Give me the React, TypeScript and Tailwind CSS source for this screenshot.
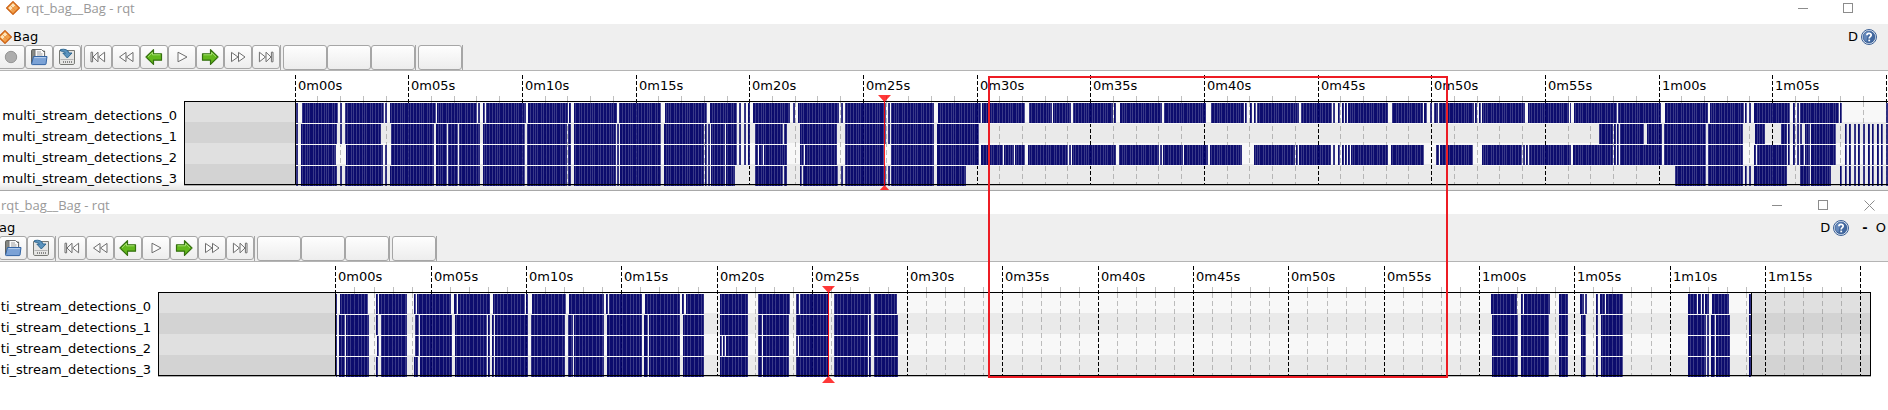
import React from "react";

type Span = [number, number];

interface TimelineData {
  id: string;
  left: number;
  dataStart: number;
  dataEnd: number;
  boxEnd: number;
  secondWidth: number;
  origin: number;
  labels: string[];
  rows: Span[][];
  cursor: number;
  lightStripes: number[];
  stripePeriod: number;
}

/** Turns a compact "a-b a-b" list of empty spans into the filled spans between them. */
function filled(start: number, end: number, gaps: string): Span[] {
  const result: Span[] = [];
  let at = start;
  for (const gap of gaps.trim().split(/\s+/)) {
    const [from, to] = gap.split("-").map(Number);
    if (from > at) result.push([at, from]);
    at = to;
  }
  if (at < end) result.push([at, end]);
  return result;
}

const ticks = "1847-1849 1851-1854 1856-1858 1860-1863 1865-1868 1870-1872 1874-1877 1879-1881 1883-1886";
const tail = `1836-1845 ${ticks}`;
const early = "434-436 447-448 458-459 480-483 525-527 567-568 571-574 616-617 619-620 661-664 704-705 707-708 710-711 725-726";

const topRows: Span[][] = [
  filled(
    296,
    1888,
    "298-302 338-340 342-345 384-385 387-390 436-437 477-478 480-483 485-486 526-528 568-569 571-574 617-619 661-665 707-710 737-739 741-744 746-748 750-753 790-793 795-798 839-841 843-845 886-888 890-891 934-938 981-982 1025-1029 1052-1053 1071-1073 1113-1114 1116-1120 1162-1164 1206-1211 1244-1245 1247-1250 1252-1254 1256-1257 1299-1301 1332-1333 1335-1338 1340-1342 1344-1345 1347-1348 1388-1392 1423-1424 1427-1430 1432-1434 1438-1439 1474-1475 1477-1479 1481-1482 1525-1528 1569-1570 1571-1574 1617-1618 1661-1665 1708-1710 1744-1745 1747-1749 1751-1754 1790-1793 1795-1797 1799-1800 1839-1840 1842-1886",
  ),
  filled(
    296,
    1888,
    `298-301 337-340 342-345 381-391 ${early} 737-739 741-744 746-748 750-755 783-784 787-800 837-845 886-888 890-891 934-937 979-1599 1613-1614 1616-1617 1619-1620 1644-1647 1662-1664 1706-1708 1743-1755 1765-1781 1787-1788 1790-1793 1795-1797 1799-1800 1802-1805 1810-1811 ${tail}`,
  ),
  filled(
    296,
    1888,
    `298-301 336-346 383-385 387-391 ${early} 737-739 741-744 746-748 750-755 758-759 763-764 787-800 804-805 837-845 884-891 934-937 979-981 1003-1004 1014-1015 1025-1028 1068-1069 1071-1072 1116-1119 1159-1160 1162-1163 1183-1184 1208-1210 1242-1254 1295-1296 1298-1299 1331-1333 1335-1338 1340-1342 1344-1345 1347-1348 1350-1351 1388-1391 1424-1436 1439-1440 1473-1482 1522-1523 1525-1526 1528-1529 1571-1573 1613-1614 1616-1617 1619-1620 1662-1664 1706-1708 1743-1754 1756-1757 1787-1788 1790-1793 1795-1797 1799-1800 1804-1805 1810-1811 ${tail}`,
  ),
  filled(
    296,
    1888,
    `298-301 337-340 342-345 383-385 387-390 ${early} 735-755 783-784 787-800 802-803 838-841 843-845 886-888 890-891 934-937 966-1675 1706-1708 1743-1745 1747-1749 1751-1754 1787-1800 1810-1811 1831-1840 1842-1845 ${ticks}`,
  ),
];

const mid = "487-488 490-492 494-495 528-531 565-568 573-574 604-607 642-644 648-649 680-683 704-720";
const late = "898-1492 1518-1521 1549-1559 1568-1581 1586-1596 1598-1601 1623-1688 1706-1707 1709-1711 1715-1716 1730-1749";

const bottomRows: Span[][] = [
  filled(
    336,
    1751,
    "337-340 368-376 378-379 407-414 416-417 451-454 457-458 490-493 525-526 528-532 566-569 604-606 608-609 642-645 680-682 684-686 704-720 748-758 790-796 799-800 829-834 871-874 897-1491 1517-1521 1523-1524 1550-1559 1568-1580 1584-1585 1587-1596 1598-1600 1605-1606 1623-1688 1697-1698 1701-1702 1704-1705 1709-1712 1729-1749",
  ),
  filled(336, 1751, `337-339 345-346 369-376 378-381 407-415 419-420 452-455 ${mid} 748-758 762-763 789-796 829-834 868-869 871-874 ${late}`),
  filled(
    336,
    1751,
    `337-339 345-346 369-377 379-381 407-415 419-420 452-455 ${mid} 722-723 725-726 748-758 762-763 789-796 798-799 829-834 868-869 871-874 ${late}`,
  ),
  filled(336, 1751, `337-339 345-346 369-376 378-381 407-414 418-420 452-455 ${mid} 748-758 762-763 789-796 829-834 868-869 871-874 ${late}`),
];

const timeLabels = (count: number) =>
  Array.from({ length: count }, (_, i) => {
    const s = i * 5;
    return `${Math.floor(s / 60)}m${String(s % 60).padStart(2, "0")}s`;
  });

const topTimeline: TimelineData = {
  id: "top",
  left: 184,
  dataStart: 295,
  dataEnd: 4000,
  boxEnd: 4000,
  origin: 295.1,
  secondWidth: 113.66 / 5,
  labels: [...timeLabels(14), ""],
  rows: topRows,
  cursor: 884,
  lightStripes: [1, 3, 5, 9, 11, 14, 17],
  stripePeriod: 19,
};

const bottomTimeline: TimelineData = {
  id: "bottom",
  left: 158,
  dataStart: 335,
  dataEnd: 1751,
  boxEnd: 1871,
  origin: 335.9,
  secondWidth: 95.3 / 5,
  labels: [...timeLabels(16), ""],
  rows: bottomRows,
  cursor: 828,
  lightStripes: [1, 4, 7, 10, 14],
  stripePeriod: 17,
};

const TOP = 30;
const ROW = 21;
const BOTTOM = 113;

function Timeline({ data, className = "" }: { data: TimelineData; className?: string }) {
  const { left, dataStart, dataEnd, boxEnd, cursor } = data;
  const seconds = (data.labels.length - 1) * 5;
  return (
    <svg className={`h-[119px] min-w-0 flex-1 ${className}`} role="img" aria-label="Message timeline" shapeRendering="crispEdges">
      <defs>
        <pattern id={`light-${data.id}`} width={data.stripePeriod} height="20" patternUnits="userSpaceOnUse">
          {data.lightStripes.map((x) => (
            <rect key={x} x={x} width="1" height="20" fill="#ffffff" fillOpacity="0.18" />
          ))}
        </pattern>
      </defs>
      <g transform={`translate(${-left} 0)`}>
        {[0, 1, 2, 3].map((r) => {
          const odd = r % 2 === 1;
          const y = TOP + r * ROW;
          return (
            <g key={r}>
              <rect x={left} y={y} width={boxEnd - left} height={ROW} fill={odd ? "#d3d3d3" : "#e0e0e0"} />
              <rect x={dataStart} y={y} width={dataEnd - dataStart} height={ROW} fill={odd ? "#eaeaea" : "#f8f8f8"} />
              <rect x={left} y={y + ROW} width={boxEnd - left} height="1" fill="#acacac" />
              <rect x={dataStart} y={y + ROW} width={dataEnd - dataStart} height="1" fill="#bebebe" />
            </g>
          );
        })}
        {Array.from({ length: seconds + 1 }, (_, s) => {
          const x = Math.floor(data.origin + s * data.secondWidth) + 0.5;
          return s % 5 === 0 ? (
            <line key={s} x1={x} x2={x} y1="4" y2={BOTTOM} stroke="#000" strokeDasharray="4 2" />
          ) : (
            <g key={s} stroke="#808080" strokeOpacity="0.5">
              <line x1={x} x2={x} y1="25" y2={TOP} />
              <line x1={x} x2={x} y1={TOP + 1} y2={BOTTOM} strokeDasharray="5 3" />
            </g>
          );
        })}
        {data.rows.map((spans, r) => (
          <g key={r}>
            {spans.map(([from, to]) => {
              const y = TOP + 2 + r * ROW;
              return (
                <g key={from}>
                  <rect x={from} y={y} width={to - from} height="20" fill="#000066" fillOpacity="0.95" />
                  <rect x={from} y={y} width={to - from} height="20" fill={`url(#light-${data.id})`} />
                  <rect x={to - 1} y={y} width="1" height="20" fill="#ffffff" fillOpacity="0.14" />
                  {r < 3 && <rect x={from} y={y + 20} width={to - from} height="1" fill="#f8f8f8" />}
                </g>
              );
            })}
          </g>
        ))}
        <rect x={left + 0.5} y={TOP + 0.5} width={boxEnd - left - 1} height={BOTTOM - TOP} fill="none" stroke="#000" />
        <rect x={dataStart} y={TOP} width="1" height={BOTTOM - TOP} fill="#000" />
        <rect x={dataEnd} y={TOP} width="1" height={BOTTOM - TOP} fill="#000" />
        {data.labels.map((label, i) =>
          label ? (
            <text
              key={label}
              x={Math.floor(data.origin + i * 5 * data.secondWidth) + 3}
              y="19"
              className="fill-black font-['DejaVu_Sans',sans-serif] text-[13px]"
            >
              {label}
            </text>
          ) : null,
        )}
        <rect x={cursor} y={TOP} width="1" height={BOTTOM - TOP + 1} fill="#ff0000" fillOpacity="0.9" />
        <path
          d={`M${cursor - 6} 24h13l-6.500 7z M${cursor + 0.5} 114l6.500 7h-13z`}
          fill="#ff0000"
          fillOpacity="0.78"
          className="[shape-rendering:geometricPrecision]"
        />
      </g>
    </svg>
  );
}

function Logo() {
  return (
    <svg viewBox="0 0 14 14" className="size-3.5 shrink-0" aria-hidden="true">
      <path d="M7 .6 13.400 7 7 13.400.6 7z" fill="#f3a343" stroke="#c8590f" strokeWidth="1.100" />
      <path d="M7 1.800 9.800 4.600 6.500 8 5.200 10 1.800 7z" fill="#fde3bb" />
      <path d="M9.800 4.600 12.200 7 7 12.200 5.200 10 6.500 8z" fill="#f0a050" />
      <path d="M7 1.800 12.200 7 7 12.200 1.800 7z M4.400 4.400l5.200 5.200M9.600 4.400 4.400 9.600" fill="none" stroke="#e98a2c" strokeWidth=".7" />
    </svg>
  );
}

function Help() {
  return (
    <svg viewBox="0 0 16 16" className="block size-4" aria-hidden="true">
      <circle cx="8" cy="8" r="7.500" fill="#eef3fa" stroke="#3a5f95" />
      <circle cx="8" cy="8" r="6" fill="#42689f" stroke="#204a87" strokeWidth=".6" />
      <path d="M2.500 9a5.500 5.500 0 0 1 7-6.300Q6 5 5.500 12.800A5.500 5.500 0 0 1 2.500 9z" fill="#7d9fce" opacity=".6" />
      <path d="M5.900 6.300C5.900 3.600 10.200 3.700 10.200 6.100 10.200 7.700 8.200 7.600 8.200 9.400" fill="none" stroke="#fff" strokeWidth="1.700" />
      <rect x="7.300" y="10.600" width="1.800" height="1.700" fill="#fff" />
    </svg>
  );
}

type IconName = "record" | "open" | "save" | "start" | "rewind" | "slower" | "play" | "faster" | "forward" | "end";

const outline = { fill: "#fcfcfc", stroke: "#6e6e6e", strokeWidth: 1 } as const;
const green = { fill: "#62b81c", stroke: "#357010", strokeWidth: 1.2, strokeLinejoin: "round" } as const;

const icons: Record<IconName, React.ReactNode> = {
  record: <circle cx="9" cy="9" r="5.700" fill="#adadad" stroke="#959595" />,
  open: (
    <>
      <path d="M1.600 15.500V2.600q0-1 1-1h3l1 1.500h8V14" fill="#888a85" stroke="#555753" />
      <path d="M5 9.500V1.500h6.500L14.500 4.500v5z" fill="#fafafa" stroke="#707070" />
      <path d="M7 4h4M7 6h5.500M7 8h5.500" stroke="#a0a0a0" />
      <path d="M3.500 8.500h13.500l-1 7.500q-.1.600-.8.600H2.300q-.8 0-.7-.8z" fill="#7ba2d6" stroke="#3465a4" />
      <path d="M4.400 9.600h11.400" stroke="#b9d1ee" />
    </>
  ),
  save: (
    <>
      <path d="M1.500 2.500h15v11.500q0 2.500-1 2.500H2.500q-1 0-1-2.500z" fill="#e6e6e4" stroke="#777974" />
      <path d="M2.500 11.500h13" stroke="#b5b5b5" />
      <path d="M5 14h1M7 14h1M9 14h1M11 14h1M13 14h1" stroke="#888" strokeWidth="2" />
      <path d="M2.500 1.500q7-1.300 8.500 3.500h3L9.300 10 4.800 5h2.700Q6.500 3 2.500 3z" fill="#5b93bd" stroke="#26618c" strokeWidth=".9" />
    </>
  ),
  start: (
    <g {...outline}>
      <path d="M2 4.200h1.600v9.600H2zM9 4.200v9.600L4 9zM15.600 4.200v9.600L9.600 9z" />
    </g>
  ),
  rewind: (
    <g {...outline}>
      <path d="M9 4.400v9.200L2.500 9zM16 4.400v9.200L9.500 9z" />
    </g>
  ),
  slower: (
    <>
      <path d="M1 9 8.500 1.600v4.200h8v6.400h-8v4.200z" {...green} />
      <path d="M3 8.800 7.500 4.400v2.400h8" fill="none" stroke="#a5df70" />
    </>
  ),
  play: <path d="M5 4.200v9.600L14 9z" {...outline} />,
  faster: (
    <>
      <path d="M17 9 9.500 1.600v4.200h-8v6.400h8v4.200z" {...green} />
      <path d="M2.500 6.800h8V4.400L15 8.800" fill="none" stroke="#a5df70" />
    </>
  ),
  forward: (
    <g {...outline}>
      <path d="M2.500 4.400v9.200L9 9zM9.500 4.400v9.200L16 9z" />
    </g>
  ),
  end: (
    <g {...outline}>
      <path d="M14.400 4.200H16v9.600h-1.600zM9 4.200v9.600L14 9zM2.400 4.200v9.600L8.400 9z" />
    </g>
  ),
};

const face = "shrink-0 rounded-[3px] border border-[#a6a6a6] bg-linear-to-b from-[#fefefe] to-[#ededed]";

function ToolButton({ name }: { name: IconName }) {
  return (
    <button type="button" aria-label={name} className={`flex h-6 w-7 items-center justify-center ${face}`}>
      <svg viewBox="0 0 18 18" className="size-[18px]" aria-hidden="true">
        {icons[name]}
      </svg>
    </button>
  );
}

function BlankButton({ label }: { label: string }) {
  return <button type="button" aria-label={label} className={`h-[25px] w-11 ${face}`} />;
}

function Separator() {
  return <div className="h-[25px] w-[3px] shrink-0 border-l border-[#a6a6a6]" />;
}

function Toolbar({ first, className }: { first: IconName[]; className: string }) {
  const playback: IconName[] = ["start", "rewind", "slower", "play", "faster", "forward", "end"];
  return (
    <div className={`flex h-[25px] items-start ${className}`}>
      {first.map((n) => (
        <ToolButton key={n} name={n} />
      ))}
      <Separator />
      {playback.map((n) => (
        <ToolButton key={n} name={n} />
      ))}
      <Separator />
      <BlankButton label="Zoom in" />
      <BlankButton label="Zoom out" />
      <BlankButton label="Zoom reset" />
      <Separator />
      <BlankButton label="Thumbnails" />
      <Separator />
    </div>
  );
}

function WindowControls({ close, className }: { close?: boolean; className: string }) {
  return (
    <div className={`ml-auto flex items-center text-[#8c8c8c] ${className}`}>
      <button type="button" aria-label="Minimize" className="flex size-[11px] items-center">
        <span className="h-px w-[10px] bg-current" />
      </button>
      <button type="button" aria-label="Maximize" className="size-[11px]">
        <span className="block size-[10px] border border-current" />
      </button>
      {close && (
        <button type="button" aria-label="Close" className="size-[11px]">
          <svg viewBox="0 0 11 11" className="block size-[11px]" aria-hidden="true">
            <path d="M.5.5l10 10M10.500.5l-10 10" stroke="currentColor" />
          </svg>
        </button>
      )}
    </div>
  );
}

function TopicList({ prefix, className }: { prefix: string; className: string }) {
  return (
    <ul className={`shrink-0 pt-[34px] pr-[7px] text-right text-[13px] leading-[21px] whitespace-nowrap ${className}`}>
      {[0, 1, 2, 3].map((n) => (
        <li key={n}>{`${prefix}_${n}`}</li>
      ))}
    </ul>
  );
}

const titleText = "font-['Open_Sans',sans-serif] text-[13px] leading-4 text-[#999]";

export default function App() {
  return (
    <main className="relative w-full overflow-hidden bg-white font-['DejaVu_Sans',sans-serif] text-[13px] text-black">
      <section className="border-b border-[#a8a8a8]">
        <header className="flex h-6 items-start pl-1.5">
          <div className="flex h-4 items-center gap-1.5">
            <Logo />
            <h1 className={titleText}>rqt_bag__Bag - rqt</h1>
          </div>
          <WindowControls className="h-4 gap-[34px] pr-[34px]" />
        </header>
        <div className="border-b border-[#b4b4b4] bg-[#efefef] pt-[5px]">
          <div className="flex h-4 items-center">
            <span className="-ml-0.5 flex items-center">
              <Logo />
            </span>
            <h2 className="pl-px leading-4">Bag</h2>
            <div className="ml-auto flex items-center gap-[3px] pr-[11px]">
              <button type="button" className="leading-4">D</button>
              <button type="button" aria-label="Help">
                <Help />
              </button>
            </div>
          </div>
          <Toolbar first={["record", "open", "save"]} className="-ml-[3px]" />
        </div>
        <div className="flex bg-linear-to-b from-white from-92% to-[#e6e6e6]">
          <TopicList prefix="multi_stream_detections" className="w-[184px]" />
          <Timeline data={topTimeline} />
        </div>
      </section>

      <section>
        <header className="flex h-[23px] items-start pt-1.5">
          <h1 className={`pl-px ${titleText}`}>rqt_bag__Bag - rqt</h1>
          <WindowControls close className="h-4 gap-[35px] pr-[13px]" />
        </header>
        <div className="border-b border-[#b4b4b4] bg-[#efefef] pt-1.5">
          <div className="flex h-4 items-center">
            <h2 className="-ml-px leading-4">ag</h2>
            <div className="ml-auto flex items-center pr-0.5">
              <button type="button" className="pr-[3px] leading-4">D</button>
              <button type="button" aria-label="Help">
                <Help />
              </button>
              <button type="button" className="pr-2 pl-[13px] leading-4 font-bold">-</button>
              <button type="button" className="leading-4">O</button>
            </div>
          </div>
          <Toolbar first={["open", "save"]} className="-ml-px" />
        </div>
        <div className="flex pb-7">
          <TopicList prefix="ti_stream_detections" className="w-[158px]" />
          <Timeline data={bottomTimeline} className="overflow-visible" />
        </div>
      </section>

      <div className="pointer-events-none absolute top-[76px] left-[988px] h-[302px] w-[460px] border-2 border-[#ed1c24]" />
    </main>
  );
}
